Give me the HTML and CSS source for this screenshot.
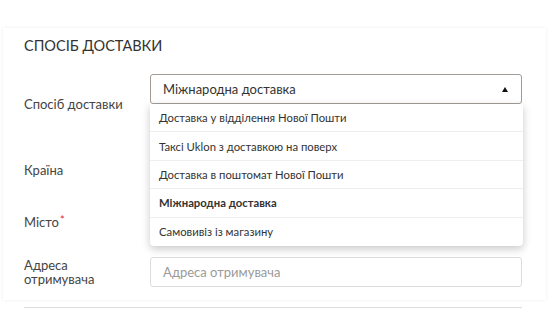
FILE: index.html
```html
<!DOCTYPE html>
<html lang="uk">
<head>
<meta charset="utf-8">
<link rel="stylesheet" href="styles.css">
</head>
<body>
<section class="card">
  <h2 class="title">Спосіб доставки</h2>
  <div class="row row-select">
    <label class="label">Спосіб доставки</label>
    <div class="control control-tall">
      <div class="select">
        <span class="select-value">Міжнародна доставка</span>
        <span class="arrow"></span>
      </div>
      <ul class="dropdown">
        <li class="option">Доставка у відділення Нової Пошти</li>
        <li class="option">Таксі Uklon з доставкою на поверх</li>
        <li class="option">Доставка в поштомат Нової Пошти</li>
        <li class="option option-active">Міжнародна доставка</li>
        <li class="option">Самовивіз із магазину</li>
      </ul>
    </div>
  </div>
  <div class="row">
    <label class="label">Країна</label>
    <div class="control"><div class="input"></div></div>
  </div>
  <div class="row">
    <label class="label">Місто<span class="req">*</span></label>
    <div class="control"><div class="input"></div></div>
  </div>
  <div class="row">
    <label class="label label-multi">Адреса<br>отримувача</label>
    <div class="control"><div class="input"><span class="placeholder">Адреса отримувача</span></div></div>
  </div>
</section>
<hr class="divider">
</body>
</html>
```
FILE: styles.css
```css
* { box-sizing: border-box; }
html, body { margin: 0; padding: 0; background: #fff; }
body {
  font-family: Lato, "Noto Sans", sans-serif;
  color: #333;
  width: 548px;
  height: 330px;
  overflow: hidden;
}
.card {
  margin: 28px 0 0 3px;
  width: 543px;
  height: 272px;
  padding: 8px 24px 0 21px;
  box-shadow: 0 0 3px rgba(0,0,0,0.08);
}
.title {
  margin: 0 0 18px 0;
  font-size: 14.5px;
  line-height: 20px;
  font-weight: 400;
  text-transform: uppercase;
  color: #333;
}
.row {
  display: flex;
  align-items: center;
  margin-bottom: 21px;
}
.label {
  width: 126px;
  flex: 0 0 126px;
  font-size: 13px;
  line-height: 15px;
  color: #444;
}
.label-multi { line-height: 14.5px; }
.req { color: #e0262b; font-size: 11px; vertical-align: 3px; margin-left: 1px; }
.control { flex: 1; position: relative; }
.control-tall { height: 60px; }
.select {
  height: 30px;
  border: 1px solid #a39c96;
  border-radius: 3px;
  display: flex;
  align-items: center;
  padding: 0 11px 0 12px;
  justify-content: space-between;
}
.select-value { font-size: 13px; color: #333; }
.arrow {
  width: 0; height: 0;
  border-left: 3px solid transparent;
  border-right: 3px solid transparent;
  border-bottom: 5px solid #111;
  margin-right: 2px;
}
.input {
  height: 30px;
  border: 1px solid #ddd;
  border-radius: 3px;
  display: flex;
  align-items: center;
  padding: 0 12px;
}
.placeholder { font-size: 13px; color: #9a9a9a; }
.dropdown {
  position: absolute;
  left: 0;
  top: 30px;
  width: 373px;
  margin: 0;
  padding: 0;
  list-style: none;
  background: #fff;
  border-radius: 0 0 4px 4px;
  box-shadow: 0 3px 8px rgba(0,0,0,0.22);
  z-index: 5;
}
.option {
  height: 28.4px;
  display: flex;
  align-items: center;
  padding: 0 9px;
  font-size: 11.3px;
  color: #333;
  border-bottom: 1px solid #eee;
}
.option:last-child { border-bottom: 0; }
.option-active { font-weight: 700; }
.divider {
  margin: 7px 0 0 24px;
  width: 498px;
  border: 0;
  border-top: 1px solid #ddd;
}
```
